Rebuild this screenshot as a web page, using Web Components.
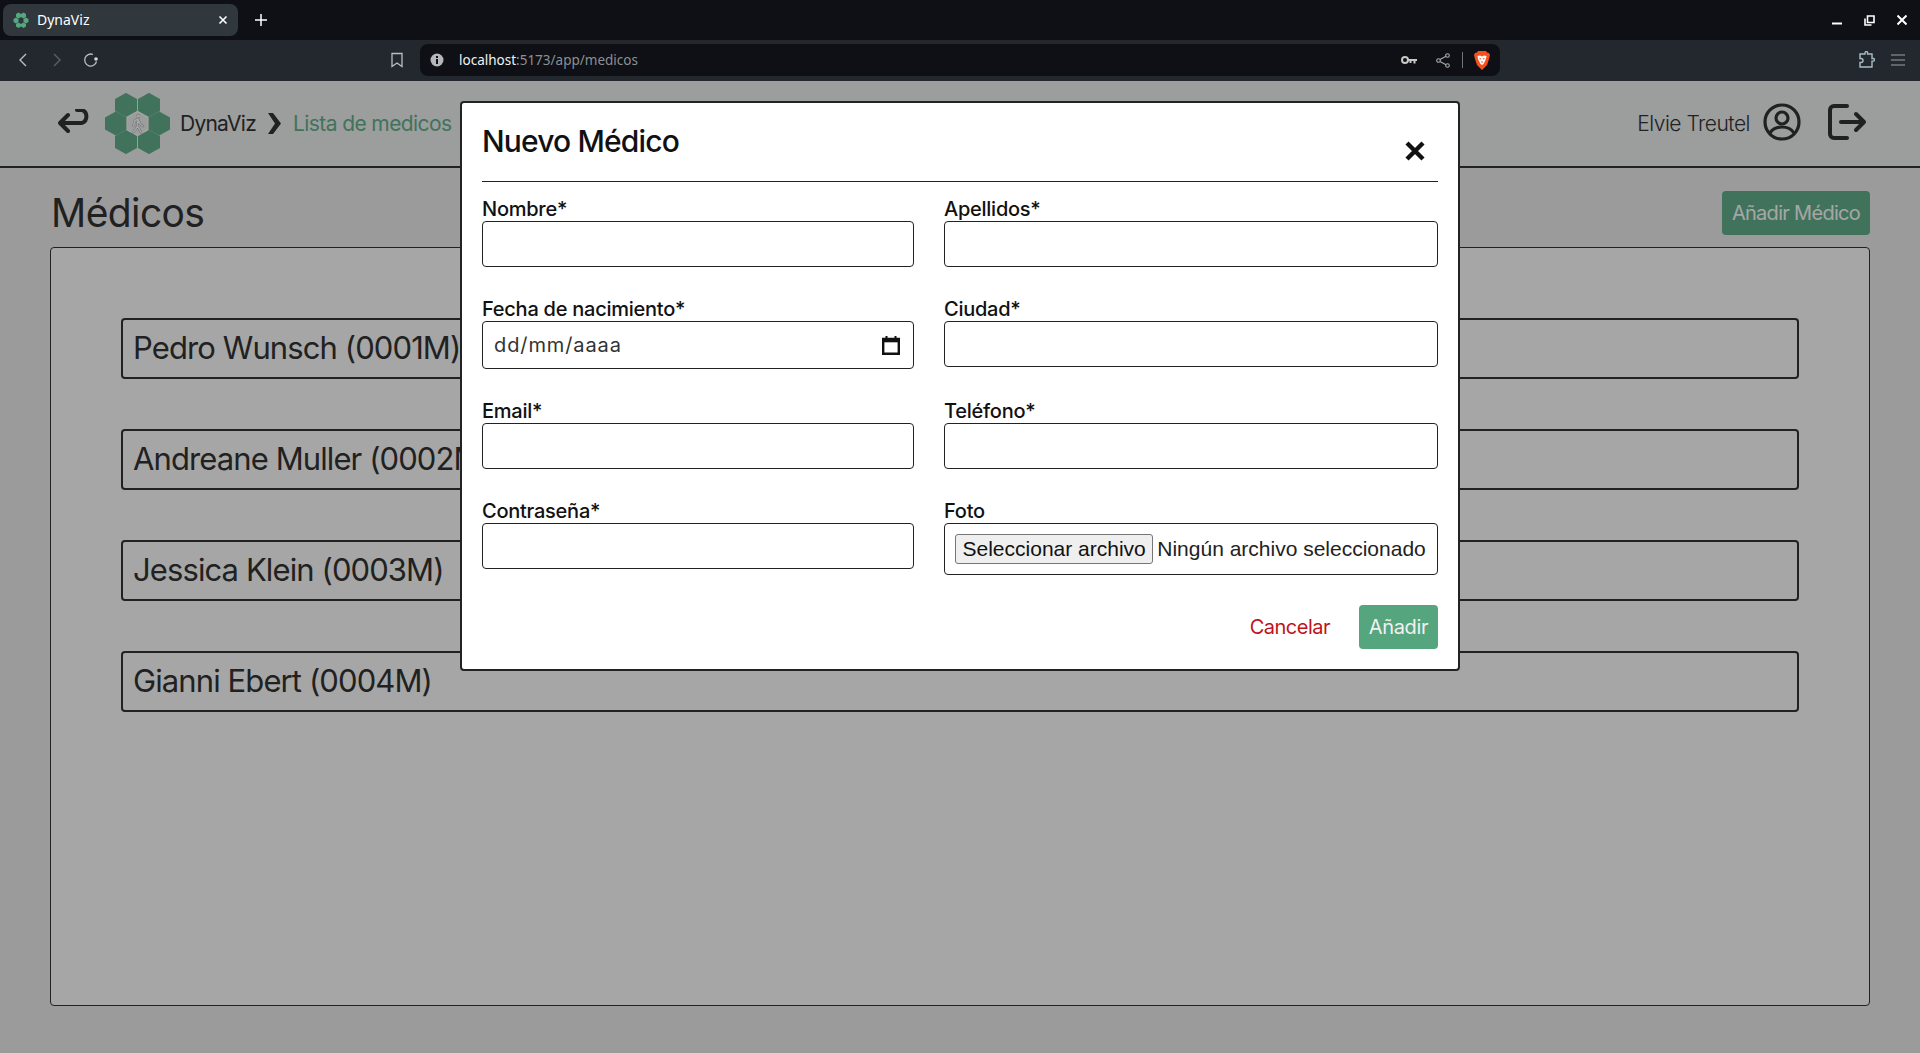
<!DOCTYPE html>
<html lang="es">
<head>
<meta charset="utf-8">
<title>DynaViz</title>
<style>
  html,body{margin:0;height:100%;overflow:hidden;}
  body{font-family:"Inter","Liberation Sans",sans-serif;background:#eeeeee;}
  #root{position:relative;height:1053px;display:flex;flex-direction:column;}
</style>
</head>
<body>
<div id="root">
  <browser-bar title="DynaViz" url-host="localhost" url-rest=":5173/app/medicos"></browser-bar>
  <app-header user="Elvie Treutel" section="Lista de medicos"></app-header>
  <medicos-page>
    <medico-row>Pedro Wunsch (0001M)</medico-row>
    <medico-row>Andreane Muller (0002M)</medico-row>
    <medico-row>Jessica Klein (0003M)</medico-row>
    <medico-row>Gianni Ebert (0004M)</medico-row>
  </medicos-page>
  <nuevo-medico-modal></nuevo-medico-modal>
</div>

<script>
const LOGO = (function(){
  const hex = (cx,cy)=>{
    const w=11,h=12.1,q=6;
    return `<polygon fill="#64b18e" points="${cx},${cy-h} ${cx+w},${cy-q} ${cx+w},${cy+q} ${cx},${cy+h} ${cx-w},${cy+q} ${cx-w},${cy-q}"/>`;
  };
  const walker = "M33 26l-3 1.500-1.500 5M33 26l2 5 3 2M33 27l-.5 6 3.500 6.500M32.500 33l-1.500 3-3 3.500";
  return (s)=>`<svg width="${s}" height="${s*61/65}" viewBox="0 0 65 61" aria-hidden="true" style="display:block">
    ${hex(21,12)}${hex(44,12)}${hex(10.8,30.5)}${hex(54.2,30.5)}${hex(21,49)}${hex(44,49)}
    <polygon fill="none" stroke="#fff" stroke-width="1" points="32.5,18.500 43,24.500 43,36.500 32.5,42.500 22,36.500 22,24.500"/>
    <path d="${walker}" fill="none" stroke="#b0b0b0" stroke-width="2.600" stroke-linecap="round" stroke-linejoin="round"/>
    <circle cx="33.4" cy="23" r="2" fill="#b0b0b0"/>
    <circle cx="33.4" cy="23" r="1.600" fill="#fff"/>
    <path d="${walker}" fill="none" stroke="#fff" stroke-width="1.500" stroke-linecap="round" stroke-linejoin="round"/>
  </svg>`;
})();

const barTemplate = document.createElement('template');
barTemplate.innerHTML = `
<style>
  :host{display:block;font-family:"Noto Sans","Open Sans",sans-serif;color:#fff;}
  .strip{height:40px;background:#0e1015;display:flex;align-items:center;padding-left:3px;box-sizing:border-box;}
  .tab{width:235px;height:32px;background:#30383e;border-radius:8px;display:flex;align-items:center;padding:0 10px;box-sizing:border-box;font-size:14px;gap:8px;}
  .tab .name{flex:1;margin-bottom:2px;}
  .plus{margin-left:16px;display:flex;}
  .winbtns{margin-left:auto;display:flex;align-items:center;gap:22px;padding-right:13px;}
  .tools{height:41px;background:#22282d;display:flex;align-items:center;box-sizing:border-box;padding:0 0 1px 16px;}
  .nav{display:flex;align-items:center;gap:20px;width:404px;}
  .nav .reload{margin-left:-1px;}
  .nav .mark{margin-left:auto;margin-right:16px;display:flex;}
  .addr{width:1080px;height:32px;background:#0e1015;border-radius:8px;display:flex;align-items:center;padding:0 10px;box-sizing:border-box;font-size:13.500px;margin-right:auto;}
  .addr .host{color:#f0f2f4;margin-left:15px;}
  .addr .rest{color:#8b8f94;}
  .addr .icons{margin-left:auto;display:flex;align-items:center;}
  .share{margin:0 12px 0 19px;}
  .sep{width:1px;height:16px;background:#70757a;margin-right:11px;}
  .right{display:flex;gap:16px;align-items:center;padding-right:15px;}
  svg{display:block;}
</style>
<div class="strip">
  <div class="tab">
    <svg width="16" height="16" viewBox="0 0 16 16"><g fill="#56a67f"><path d="M5.500 .5l2.500 1.500v3L5.500 6.500 3 5V2zM10.500 .5L13 2v3l-2.500 1.500L8 5V2zM3 5.500L5.500 7v3L3 11.500.5 10V7zM13 5.500L15.500 7v3L13 11.500 10.500 10V7zM5.500 10.500L8 12v2.500L5.500 16 3 14.500V12zM10.500 10.500L13 12v2.500L10.500 16 8 14.500V12z"/></g></svg>
    <span class="name"></span>
    <svg width="10" height="10" viewBox="0 0 10 10"><path d="M1.500 1.500l7 7M8.500 1.500l-7 7" stroke="#fff" stroke-width="1.600"/></svg>
  </div>
  <div class="plus"><svg width="14" height="14" viewBox="0 0 14 14"><path d="M7 1v12M1 7h12" stroke="#fff" stroke-width="1.500"/></svg></div>
  <div class="winbtns">
    <svg width="10" height="10" viewBox="0 0 10 10"><path d="M0 8.500h10" stroke="#fff" stroke-width="2"/></svg>
    <svg width="11" height="11" viewBox="0 0 11 11"><path d="M3.500 1h6.500v6.500H3.500zM1 3.500V10h6.500" fill="none" stroke="#fff" stroke-width="1.600"/></svg>
    <svg width="10" height="10" viewBox="0 0 10 10"><path d="M.500.500l9 9M9.500.500l-9 9" stroke="#fff" stroke-width="2"/></svg>
  </div>
</div>
<div class="tools">
  <div class="nav">
    <svg width="14" height="16" viewBox="0 0 14 16"><path d="M10 2L4 8l6 6" fill="none" stroke="#b9bec3" stroke-width="1.400"/></svg>
    <svg width="14" height="16" viewBox="0 0 14 16"><path d="M4 2l6 6-6 6" fill="none" stroke="#5b6167" stroke-width="1.400"/></svg>
    <svg class="reload" width="16" height="16" viewBox="0 0 16 16"><path d="M13.500 9.500A6 6 0 1 1 10 2.500" fill="none" stroke="#b9bec3" stroke-width="1.300"/><circle cx="13" cy="7" r="1.800" fill="#d8dbde"/></svg>
    <span class="mark"><svg width="14" height="16" viewBox="0 0 14 16"><path d="M2 1.500h10v13l-5-3.500-5 3.500z" fill="none" stroke="#b9bec3" stroke-width="1.300"/></svg></span>
  </div>
  <div class="addr">
    <svg width="14" height="14" viewBox="0 0 14 14"><circle cx="7" cy="7" r="6.500" fill="#b4b7ba"/><rect x="6" y="6" width="2" height="5" fill="#0e1015"/><rect x="6" y="3" width="2" height="2" fill="#0e1015"/></svg>
    <span class="host"></span><span class="rest"></span>
    <span class="icons">
      <svg width="16" height="10" viewBox="0 0 16 10"><circle cx="4" cy="5" r="3" fill="none" stroke="#c8c8c8" stroke-width="2"/><path d="M7 4h9v2h-1.500v2.500h-2V6H10.500v2h-2V6H7z" fill="#c8c8c8"/></svg>
      <svg class="share" width="14" height="15" viewBox="0 0 14 15"><g fill="none" stroke="#a8abae" stroke-width="1.100"><circle cx="2.500" cy="7.500" r="1.800"/><circle cx="11.500" cy="2.500" r="1.800"/><circle cx="11.500" cy="12.500" r="1.800"/><path d="M4 6.500l6-3.200M4 8.500l6 3.200"/></g></svg>
      <span class="sep"></span>
      <svg width="16" height="19" viewBox="0 0 16 19"><path d="M4 0h8l1 1.500L15 2l1 2-1 4-2 6-5 5-5-5-2-6L0 4l1-2 2-.5z" fill="#f4511e"/><path d="M3.500 5l2.500-.5L8 5.500l2-1 2.500.5L12 8l-1.500 3L9.500 13 8 14l-1.500-1L5.500 11 4 8z" fill="#fff"/><path d="M5.500 7.500l1.500.5M10.500 7.500L9 8M7 11h2" stroke="#f4511e" stroke-width="1.100"/></svg>
    </span>
  </div>
  <div class="right">
    <svg width="18" height="18" viewBox="0 0 18 18"><path d="M3 3h5V1.800a1.300 1.300 0 0 1 2.600 0V3H15v4.500h1.200a1.300 1.300 0 0 1 0 2.600H15V16H3v-4.500h1a2 2 0 0 0 0-4H3z" fill="none" stroke="#a9bcc4" stroke-width="1.400"/></svg>
    <svg width="14" height="12" viewBox="0 0 14 12"><path d="M0 1h14M0 6h14M0 11h14" stroke="#9aa0a5" stroke-width="1.200"/></svg>
  </div>
</div>`;
class BrowserBar extends HTMLElement {
  constructor(){
    super();
    const root = this.attachShadow({mode:'open'});
    root.appendChild(barTemplate.content.cloneNode(true));
    root.querySelector('.name').textContent = this.getAttribute('title');
    root.querySelector('.host').textContent = this.getAttribute('url-host');
    root.querySelector('.rest').textContent = this.getAttribute('url-rest');
  }
}
customElements.define('browser-bar', BrowserBar);

const headerTemplate = document.createElement('template');
headerTemplate.innerHTML = `
<style>
  :host{display:block;}
  .bar{height:85px;border-bottom:2px solid #333;background:#f0f1f2;display:flex;align-items:center;padding:0 53px 0 58px;color:#333;font-size:21px;letter-spacing:-.5px;}
  .bar > svg{display:block;flex:none;}
  .back{margin-bottom:2px;}
  .logo{margin-left:13px;}
  .app{margin-left:10px;letter-spacing:-.75px;}
  .chev{margin:0 12px 0 11px;}
  .section{color:#64b18e;letter-spacing:-.6px;}
  .user{margin-left:auto;font-weight:300;}
  .uicon{margin:0 0 4px 13px;}
  .out{margin:0 0 4px 27px;}
</style>
<div class="bar">
  <svg class="back" width="34" height="28" viewBox="0 0 34 28"><path d="M10 6L2 14l8 8M2 14h22a7 7 0 0 0 0-13h-5" fill="none" stroke="#333" stroke-width="4" stroke-linecap="round" stroke-linejoin="round"/></svg>
  <span class="logo"></span>
  <span class="app">DynaViz</span>
  <svg class="chev" width="14" height="21" viewBox="0 0 14 21"><path d="M1 0h5l8 10.500L6 21H1l7-10.500z" fill="#333"/></svg>
  <span class="section"></span>
  <span class="user"></span>
  <svg class="uicon" width="38" height="38" viewBox="0 0 38 38"><g fill="none" stroke="#333" stroke-width="3.200"><circle cx="19" cy="19" r="17"/><circle cx="19" cy="15" r="6"/><path d="M7 30c3-5 7-6 12-6s9 1 12 6"/></g></svg>
  <svg class="out" width="39" height="36" viewBox="0 0 39 36"><g fill="none" stroke="#333" stroke-width="4" stroke-linecap="round" stroke-linejoin="round"><path d="M19 2H6a4 4 0 0 0-4 4v24a4 4 0 0 0 4 4h13"/><path d="M13 18h23M28 10l8 8-8 8"/></g></svg>
</div>`;
class AppHeader extends HTMLElement {
  constructor(){
    super();
    const root = this.attachShadow({mode:'open'});
    root.appendChild(headerTemplate.content.cloneNode(true));
    root.querySelector('.logo').innerHTML = LOGO(65);
    root.querySelector('.section').textContent = this.getAttribute('section');
    root.querySelector('.user').textContent = this.getAttribute('user');
  }
}
customElements.define('app-header', AppHeader);

const pageTemplate = document.createElement('template');
pageTemplate.innerHTML = `
<style>
  :host{display:block;flex:1;padding:0 50px;color:#333;}
  .top{display:flex;justify-content:space-between;align-items:center;height:79px;padding-top:9px;box-sizing:border-box;}
  h1{margin:0 0 0 1px;font-size:39px;font-weight:400;letter-spacing:-.6px;}
  .add{background:#64b18e;color:#fff;border-radius:4px;height:44px;width:148px;margin-top:2px;display:flex;align-items:center;justify-content:center;font-size:20px;letter-spacing:-.7px;}
  .box{background:#fff;border:1px solid #333;border-radius:4px;height:759px;box-sizing:border-box;padding:70px 70px 0;display:flex;flex-direction:column;gap:50px;}
</style>
<div class="top"><h1>Médicos</h1><div class="add">Añadir Médico</div></div>
<div class="box"><slot></slot></div>`;
class MedicosPage extends HTMLElement {
  constructor(){
    super();
    this.attachShadow({mode:'open'}).appendChild(pageTemplate.content.cloneNode(true));
  }
}
customElements.define('medicos-page', MedicosPage);

const rowTemplate = document.createElement('template');
rowTemplate.innerHTML = `
<style>
  :host{display:block;height:61px;box-sizing:border-box;border:2px solid #333;border-radius:4px;padding-left:10px;line-height:55px;font-size:31px;letter-spacing:-.9px;color:#333;white-space:nowrap;overflow:hidden;}
</style>
<slot></slot>`;
class MedicoRow extends HTMLElement {
  constructor(){
    super();
    this.attachShadow({mode:'open'}).appendChild(rowTemplate.content.cloneNode(true));
  }
}
customElements.define('medico-row', MedicoRow);

const fieldTemplate = document.createElement('template');
fieldTemplate.innerHTML = `
<style>
  :host{display:block;}
  label{display:block;font-size:20px;font-weight:500;padding-top:1px;line-height:24px;letter-spacing:-.25px;color:#111;}
  input{display:block;width:100%;height:46px;box-sizing:border-box;border:1px solid #222;border-radius:4px;background:#fff;outline:none;}
  .date{height:48px;box-sizing:border-box;border:1px solid #222;border-radius:4px;display:flex;align-items:center;justify-content:space-between;padding:0 13px 0 11px;font-size:20px;letter-spacing:.9px;color:#333;}
  .date svg{display:block;}
  .file{height:52px;box-sizing:border-box;border:1px solid #222;border-radius:4px;display:flex;align-items:center;padding:0 10px;font-family:"Liberation Sans",Arial,sans-serif;font-size:21px;color:#222;white-space:nowrap;}
  .file button{font:inherit;color:#111;height:30px;padding:0 6.5px;border:1px solid #767676;border-radius:3px;background:#efefef;margin-right:4px;}
</style>
<label></label>
<div class="ctl"></div>`;
class FormField extends HTMLElement {
  constructor(){
    super();
    const root = this.attachShadow({mode:'open'});
    root.appendChild(fieldTemplate.content.cloneNode(true));
    root.querySelector('label').textContent = this.getAttribute('label');
    const ctl = root.querySelector('.ctl');
    const kind = this.getAttribute('kind') || 'text';
    if (kind === 'date') {
      ctl.innerHTML = `<div class="date"><span>dd/mm/aaaa</span>
        <svg width="18" height="20" viewBox="0 0 18 20"><path d="M1.200 4h15.600v14.800H1.200z" fill="none" stroke="#111" stroke-width="2.400"/><path d="M1 5.500h16" stroke="#111" stroke-width="3.600"/><path d="M4.500 1v3M13.500 1v3" stroke="#111" stroke-width="2"/></svg></div>`;
    } else if (kind === 'file') {
      ctl.innerHTML = `<div class="file"><button type="button">Seleccionar archivo</button><span>Ningún archivo seleccionado</span></div>`;
    } else {
      ctl.innerHTML = `<input type="${kind}">`;
    }
  }
}
customElements.define('form-field', FormField);

const modalTemplate = document.createElement('template');
modalTemplate.innerHTML = `
<style>
  :host{display:block;position:absolute;left:0;right:0;top:81px;bottom:0;background:rgba(0,0,0,.35);}
  .modal{position:absolute;left:460px;top:20px;width:1000px;height:570px;box-sizing:border-box;background:#fff;border:2px solid #222;border-radius:4px;padding:0 20px;}
  .head{height:79px;border-bottom:1px solid #222;display:flex;justify-content:space-between;align-items:center;box-sizing:border-box;color:#111;}
  h2{margin:0 0 2px;font-size:30px;font-weight:500;letter-spacing:-.85px;}
  .head svg{display:block;margin:17px 13px 0 0;}
  .grid{display:grid;grid-template-columns:432px 494px;column-gap:30px;padding-top:14px;grid-template-rows:100px 102px 100px 100px;}
  .actions{display:flex;justify-content:flex-end;align-items:center;margin-top:7px;}
  .cancel{color:#c0121a;font-size:20px;letter-spacing:-.5px;margin-right:29px;}
  .ok{width:79px;height:44px;border-radius:4px;background:#55a67f;color:#f1f1f1;font-size:20px;letter-spacing:-.3px;display:flex;align-items:center;justify-content:center;}
</style>
<div class="modal">
  <div class="head"><h2>Nuevo Médico</h2>
    <svg width="20" height="20" viewBox="0 0 20 20"><path d="M2 2l16 16M18 2L2 18" stroke="#111" stroke-width="4.400"/></svg>
  </div>
  <div class="grid">
    <form-field label="Nombre*"></form-field>
    <form-field label="Apellidos*"></form-field>
    <form-field label="Fecha de nacimiento*" kind="date"></form-field>
    <form-field label="Ciudad*"></form-field>
    <form-field label="Email*" kind="email"></form-field>
    <form-field label="Teléfono*" kind="tel"></form-field>
    <form-field label="Contraseña*" kind="password"></form-field>
    <form-field label="Foto" kind="file"></form-field>
  </div>
  <div class="actions"><span class="cancel">Cancelar</span><span class="ok">Añadir</span></div>
</div>`;
class NuevoMedicoModal extends HTMLElement {
  constructor(){
    super();
    this.attachShadow({mode:'open'}).appendChild(modalTemplate.content.cloneNode(true));
  }
}
customElements.define('nuevo-medico-modal', NuevoMedicoModal);
</script>
</body>
</html>
